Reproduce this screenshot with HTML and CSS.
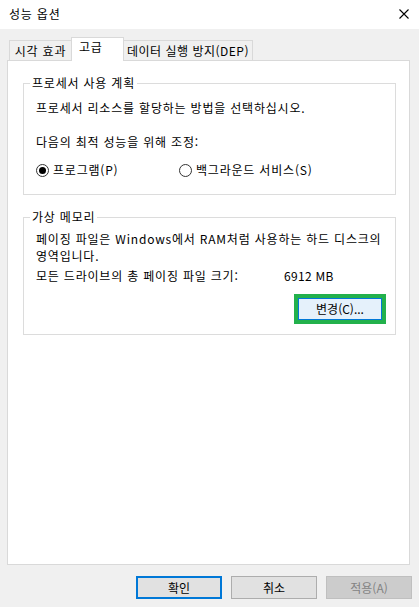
FILE: index.html
```html
<!DOCTYPE html>
<html lang="ko">
<head>
<meta charset="utf-8">
<title>성능 옵션</title>
<link rel="stylesheet" href="styles.css">
</head>
<body>
<div class="window">
  <div class="titlebar">
    <span class="title">성능 옵션</span>
    <svg class="close" width="10" height="10" viewBox="0 0 10 10"><path d="M0.5 0.5 L9.5 9.5 M9.5 0.5 L0.5 9.5" stroke="#000" stroke-width="1.1" fill="none"/></svg>
  </div>
  <div class="body">
    <div class="tabs">
      <div class="tab tab-visual">시각 효과</div>
      <div class="tab tab-adv active">고급</div>
      <div class="tab tab-dep">데이터 실행 방지(DEP)</div>
    </div>
    <div class="panel">
      <fieldset class="group group-cpu">
        <legend>프로세서 사용 계획</legend>
        <p class="line first">프로세서 리소스를 할당하는 방법을 선택하십시오.</p>
        <p class="line second">다음의 최적 성능을 위해 조정:</p>
        <div class="radios">
          <label class="radio radio-prog"><span class="dot checked"></span>프로그램(P)</label>
          <label class="radio"><span class="dot"></span>백그라운드 서비스(S)</label>
        </div>
      </fieldset>
      <fieldset class="group group-mem">
        <legend>가상 메모리</legend>
        <p class="desc">페이징 파일은 Windows에서 RAM처럼 사용하는 하드 디스크의 영역입니다.</p>
        <div class="size-row">
          <span class="size-label">모든 드라이브의 총 페이징 파일 크기:</span>
          <span class="size-value">6912 MB</span>
        </div>
        <div class="change-row">
          <button class="btn-change">변경(C)...</button>
        </div>
      </fieldset>
    </div>
    <div class="actions">
      <button class="btn btn-ok">확인</button>
      <button class="btn">취소</button>
      <button class="btn btn-disabled">적용(A)</button>
    </div>
  </div>
</div>
</body>
</html>
```
FILE: styles.css
```css
* { box-sizing: border-box; }
html, body { margin: 0; padding: 0; }
body {
  width: 419px;
  height: 607px;
  overflow: hidden;
  background: #f0f0f0;
  font-family: "Noto Sans CJK KR", "Noto Sans", sans-serif;
  font-size: 12px;
  letter-spacing: 0.8px;
  color: #000;
}
.window { width: 419px; height: 607px; display: flex; flex-direction: column; }
.titlebar {
  height: 29px;
  background: #fff;
  display: flex;
  align-items: center;
  justify-content: space-between;
  padding: 0 10px 2px 9px;
}
.title { font-size: 12px; line-height: 16px; }
.close { display: block; margin-top: 0; }
.body { flex: 1; display: flex; flex-direction: column; }
.tabs {
  display: flex;
  align-items: flex-end;
  margin: 8px 0 0 9px;
  height: 23px;
}
.tab {
  height: 20px;
  border: 1px solid #d9d9d9;
  border-bottom: 0;
  background: #f0f0f0;
  line-height: 18px;
  text-align: center;
  white-space: nowrap;
}
.tab-visual { width: 63px; padding-top: 1px; }
.tab-adv { width: 53px; margin-left: -1px; }
.tab-dep { width: 130px; margin-left: -1px; padding-top: 1px; letter-spacing: 0.5px; }
.tab.active {
  height: 24px;
  margin-bottom: -1px;
  background: #fff;
  position: relative;
  z-index: 1;
  text-align: left;
  padding-left: 7px;
  line-height: 18px;
}
.panel {
  margin: 0 9px 0 7px;
  height: 505px;
  background: #fff;
  border: 1px solid #d9d9d9;
  padding: 0 13px 0 15px;
}
.group {
  margin: 0;
  border: 1px solid #dcdcdc;
  padding: 0 13px 0 12px;
  min-width: 0;
}
.group legend {
  margin-left: -6px;
  padding: 0 2px;
  line-height: 16px;
}
.group-cpu { margin-top: 14px; padding-bottom: 16px; }
.line { margin: 0; line-height: 16px; }
.line.first { margin-top: 9px; }
.line.second { margin-top: 18px; }
.radios { display: flex; margin-top: 12px; line-height: 16px; }
.radio { display: flex; align-items: center; }
.radio-prog { width: 143px; }
.dot {
  width: 13px;
  height: 13px;
  border: 1px solid #333;
  border-radius: 50%;
  background: #fff;
  margin-right: 4px;
  display: flex;
  align-items: center;
  justify-content: center;
}
.dot.checked::after {
  content: "";
  width: 7px;
  height: 7px;
  border-radius: 50%;
  background: #000;
}
.group-mem { margin-top: 14px; padding-bottom: 14px; }
.desc { margin: 5px 0 0; line-height: 17px; }
.size-row { display: flex; margin-top: 4px; line-height: 16px; }
.size-label { width: 248px; }
.size-value { letter-spacing: 0.3px; }
.change-row { display: flex; justify-content: flex-end; margin-top: 14px; }
.btn-change {
  width: 84px;
  height: 22px;
  font: inherit;
  color: #000;
  background: #e5f1fb;
  border: 1px solid #0078d7;
  outline: 4px solid #22b14c;
  outline-offset: 0;
  padding: 0;
  line-height: 18px;
}
.actions {
  display: flex;
  justify-content: flex-end;
  gap: 9px;
  margin: 11px 7px 0 0;
}
.btn {
  width: 86px;
  height: 23px;
  font: inherit;
  color: #000;
  background: #e1e1e1;
  border: 1px solid #adadad;
  padding: 0;
  line-height: 19px;
}
.btn-ok { border: 2px solid #0078d7; }
.btn-disabled { background: #cccccc; border-color: #bfbfbf; color: #838383; }
```
